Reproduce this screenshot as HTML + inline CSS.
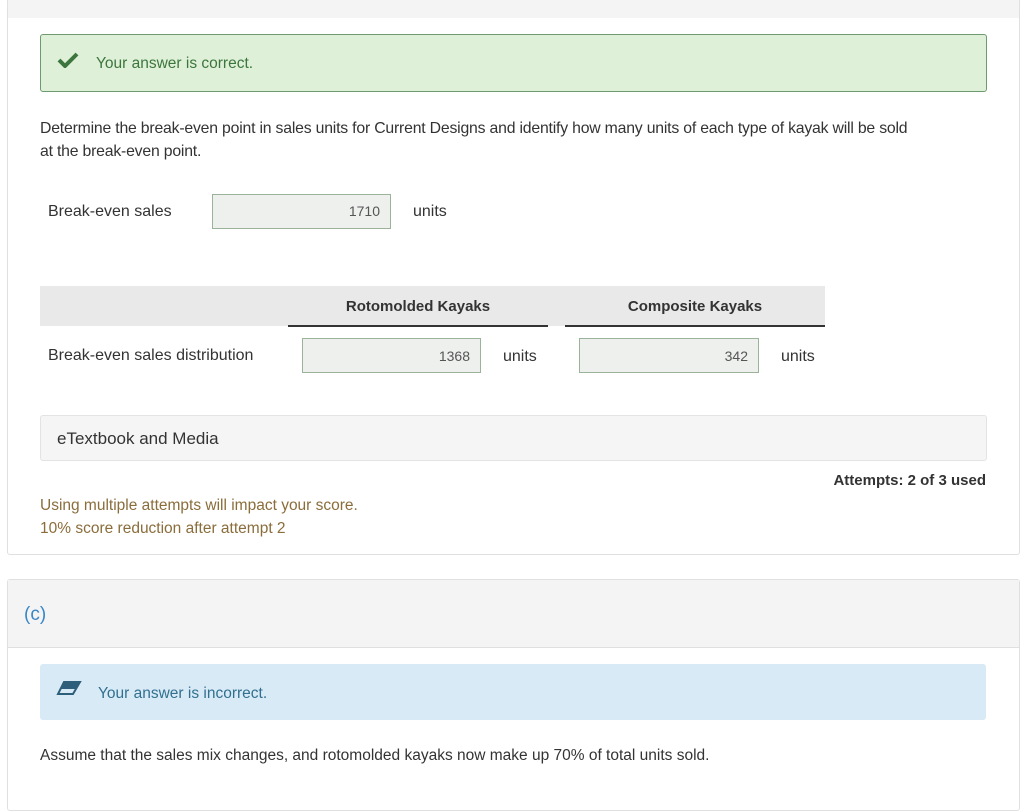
<!DOCTYPE html>
<html><head><style>
body{margin:0;background:#fff;font-family:"Liberation Sans",sans-serif;color:#333;width:1024px;height:793px;overflow:hidden;position:relative}
.abs{position:absolute}
.card{position:absolute;left:7px;width:1011px;border:1px solid #e0e0e0;border-radius:3px;background:#fff}
.inp{position:absolute;height:32px;border:1px solid #9ab39a;background:#eef0ee;box-sizing:border-box;text-align:right;padding-right:10px;line-height:33px;font-size:14px;color:#555}
.t{position:absolute;font-size:16px;white-space:nowrap}
</style></head><body>
<div class="card" style="top:-2px;height:556px;border-top:none">
 <div class="abs" style="left:0;top:0;width:1011px;height:20px;background:#f4f4f4"></div>
</div>
<div class="abs" style="left:40px;top:34px;width:945px;height:56px;background:#dff0d8;border:1px solid #6f9a6f;border-radius:3px"></div>
<svg class="abs" style="left:57px;top:52px" width="22" height="16" viewBox="0 0 22 16"><path d="M2 8 L8 14 L20 2" stroke="#3c763d" stroke-width="4" fill="none"/></svg>
<div class="t" style="left:96px;top:55px;color:#3c763d;font-size:15.5px">Your answer is correct.</div>
<div class="t" style="left:40px;top:117px;font-size:15.8px;line-height:23px;letter-spacing:-0.2px">Determine the break-even point in sales units for Current Designs and identify how many units of each type of kayak will be sold<br>at the break-even point.</div>
<div class="t" style="left:48px;top:203px">Break-even sales</div>
<div class="inp" style="left:212px;top:194px;width:179px;height:35px">1710</div>
<div class="t" style="left:413px;top:203px">units</div>
<div class="abs" style="left:40px;top:286px;width:785px;height:40px;background:#e9e9e9"></div>
<div class="abs" style="left:288px;top:325px;width:260px;height:2px;background:#333"></div>
<div class="abs" style="left:565px;top:325px;width:260px;height:2px;background:#333"></div>
<div class="t" style="left:288px;width:260px;text-align:center;top:298px;font-weight:bold;font-size:15px">Rotomolded Kayaks</div>
<div class="t" style="left:565px;width:260px;text-align:center;top:298px;font-weight:bold;font-size:15px">Composite Kayaks</div>
<div class="t" style="left:48px;top:347px">Break-even sales distribution</div>
<div class="inp" style="left:302px;top:338px;width:179px;height:35px;line-height:34px">1368</div>
<div class="t" style="left:503px;top:348px">units</div>
<div class="inp" style="left:579px;top:338px;width:180px;height:35px;line-height:34px">342</div>
<div class="t" style="left:781px;top:348px">units</div>
<div class="abs" style="left:40px;top:415px;width:945px;height:44px;background:#f5f5f5;border:1px solid #e3e3e3;border-radius:3px"></div>
<div class="t" style="left:57px;top:429px;font-size:17px">eTextbook and Media</div>
<div class="t" style="left:700px;width:286px;text-align:right;top:472px;font-weight:bold;font-size:15px">Attempts: 2 of 3 used</div>
<div class="t" style="left:40px;top:494px;color:#8a6d3b;line-height:23px;font-size:15.5px">Using multiple attempts will impact your score.<br>10% score reduction after attempt 2</div>
<div class="card" style="top:579px;height:230px">
 <div class="abs" style="left:0;top:0;width:1011px;height:67px;background:#f4f4f4;border-bottom:1px solid #e0e0e0"></div>
</div>
<div class="t" style="left:24px;top:604px;color:#3a87c8;font-size:19px">(c)</div>
<div class="abs" style="left:40px;top:664px;width:946px;height:56px;background:#d9eaf7;border-radius:3px"></div>
<svg class="abs" style="left:56px;top:681px" width="26" height="16" viewBox="0 0 26 16"><path d="M8 1 L24 1 L17 13 L2 13 Z" fill="none" stroke="#2d5f7a" stroke-width="2"/><path d="M8 1 L24 1 L20 8 L5 8 Z" fill="#2d5f7a"/></svg>
<div class="t" style="left:98px;top:685px;color:#31708f;font-size:15.5px">Your answer is incorrect.</div>
<div class="t" style="left:40px;top:747px;font-size:15.5px">Assume that the sales mix changes, and rotomolded kayaks now make up 70% of total units sold.</div>
</body></html>
